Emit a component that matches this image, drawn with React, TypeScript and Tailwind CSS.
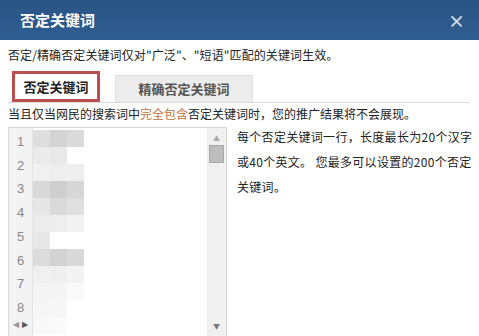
import React from 'react';

const font = { fontFamily: '"Noto Sans CJK SC", "Liberation Sans", sans-serif' };

// pixelated (redacted) keyword cells, 3 columns per row
const blurRows: string[][] = [
  ['#dedede', '#d4d4d4', '#dadada'],
  ['#ebebeb', '#e9e9e9', '#ffffff'],
  ['#f0f0f0', '#eeeeee', '#eeeeee'],
  ['#d9d9d9', '#cfcfcf', '#d7d7d7'],
  ['#e6e6e6', '#dadada', '#dfdfdf'],
  ['#ececec', '#eeeeee', '#f2f2f2'],
  ['#e8e8e8', '#ffffff', '#ffffff'],
  ['#dcdcdc', '#d2d2d2', '#d9d9d9'],
  ['#f0f0f0', '#efefef', '#f3f3f3'],
  ['#f4f4f4', '#f5f5f5', '#fafafa'],
  ['#f6f6f6', '#f7f7f7', '#ffffff'],
  ['#f8f8f8', '#fafafa', '#ffffff'],
];

const App = () => {
  return (
    <div className="w-[479px] h-[336px] overflow-hidden bg-white text-[#222]" style={font}>
      {/* Title bar */}
      <div className="h-[40px] bg-gradient-to-b from-[#2a5485] to-[#305d92] flex items-center justify-between pl-[20px] pr-[14px]">
        <span className="text-white text-[15px] font-bold">否定关键词</span>
        <span className="text-[#d3dbe6] text-[17px] font-bold leading-none">×</span>
      </div>

      <div className="px-[8px]">
        <p className="text-[12px] leading-[16px] mt-[7px] tracking-[0.1px]">
          否定/精确否定关键词仅对"广泛"、"短语"匹配的关键词生效。
        </p>

        {/* Tabs */}
        <div className="mt-[9px] flex items-end border-b border-[#dcdcdc] mr-[1px] h-[31px] pl-[4px]">
          <div className="w-[88px] h-[31px] border-[3px] border-[#b9504f] bg-white flex items-center justify-center text-[13px] font-bold text-[#222]">
            否定关键词
          </div>
          <div className="ml-[15px] w-[138px] h-[27px] bg-[#ececec] border border-[#dedede] border-b-0 flex items-center justify-center text-[13px] font-bold text-[#555]">
            精确否定关键词
          </div>
        </div>

        <p className="text-[12px] leading-[16px] mt-[3px]">
          当且仅当网民的搜索词中<span className="text-[#c0713c]">完全包含</span>否定关键词时，您的推广结果将不会展现。
        </p>

        <div className="flex mt-[5px]">
          {/* Keyword textarea */}
          <div className="relative w-[219px] h-[210px] border border-[#d8d8d8] flex shrink-0 overflow-hidden">
            <div className="w-[24px] bg-[#f3f3f3] border-r border-[#e4e4e4] flex flex-col items-center pt-[2px] text-[13px] leading-[23.7px] text-[#888]" style={{ fontFamily: '"Liberation Sans", sans-serif' }}>
              {[1, 2, 3, 4, 5, 6, 7, 8].map((n) => (
                <span key={n}>{n}</span>
              ))}
              <div className="flex gap-[3px] mt-[1px] text-[8px] leading-none text-[#999]">
                <span>◀</span>
                <span className="text-[#555]">▶</span>
              </div>
            </div>

            <div className="flex-1 pt-[2px]">
              <div className="w-[52px] flex flex-col blur-[0.6px]">
                {blurRows.map((row, i) => (
                  <div key={i} className="flex h-[17px]">
                    {row.map((c, j) => (
                      <div key={j} className="w-[17px] h-[17px]" style={{ backgroundColor: c }} />
                    ))}
                  </div>
                ))}
              </div>
            </div>

            {/* Scrollbar */}
            <div className="w-[19px] bg-[#f0f0f0] flex flex-col items-center pt-[7px] pb-[6px]">
              <span className="text-[7px] leading-none text-[#a8a8a8]">▲</span>
              <div className="mt-[3px] w-[15px] h-[18px] bg-[#bdbdbd] border border-[#a8a8a8]" />
              <div className="flex-1" />
              <span className="text-[7px] leading-none text-[#777]">▼</span>
            </div>
          </div>

          {/* Help text */}
          <div className="ml-[10px] -mt-[3px] text-[12px] leading-[25px] tracking-[0.3px] whitespace-nowrap">
            <p>每个否定关键词一行，长度最长为20个汉字</p>
            <p>或40个英文。 您最多可以设置的200个否定</p>
            <p>关键词。</p>
          </div>
        </div>
      </div>
    </div>
  );
};

export default App;
